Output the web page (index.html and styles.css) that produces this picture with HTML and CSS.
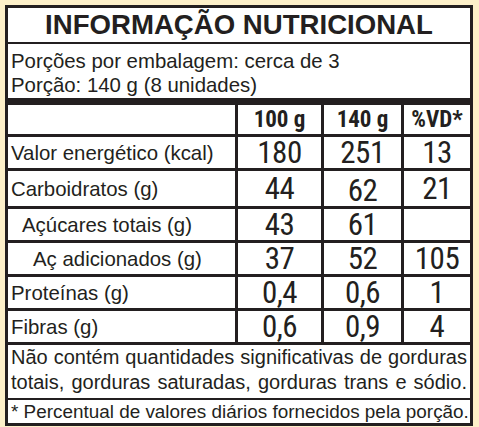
FILE: index.html
```html
<!DOCTYPE html>
<html>
 <head>
    <meta charset="utf-8">
    <meta name="viewport" content="width=device-width">
    <title>Informação nutricional</title>
    <link rel="stylesheet" href="styles.css">
 </head>
 <body>
  <div class="label">
    <h1 class="title">INFORMAÇÃO NUTRICIONAL</h1>
    <div class="serving">
      <p>Porções por embalagem: cerca de 3</p>
      <p>Porção: 140 g (8 unidades)</p>
    </div>
    <table class="facts">
      <colgroup>
        <col class="c-name">
        <col class="c-100">
        <col class="c-140">
        <col class="c-vd">
      </colgroup>
      <thead>
        <tr><th></th><th>100 g</th><th>140 g</th><th>%VD*</th></tr>
      </thead>
      <tbody>
        <tr><td class="name">Valor energético (kcal)</td><td>180</td><td>251</td><td>13</td></tr>
        <tr><td class="name">Carboidratos (g)</td><td>44</td><td class="low">62</td><td>21</td></tr>
        <tr><td class="name sub">Açúcares totais (g)</td><td>43</td><td>61</td><td></td></tr>
        <tr><td class="name sub2">Aç adicionados (g)</td><td>37</td><td>52</td><td>105</td></tr>
        <tr><td class="name">Proteínas (g)</td><td>0,4</td><td>0,6</td><td>1</td></tr>
        <tr><td class="name">Fibras (g)</td><td>0,6</td><td>0,9</td><td>4</td></tr>
      </tbody>
    </table>
    <p class="note"><span>Não contém quantidades significativas de gorduras</span><span>totais, gorduras saturadas, gorduras trans e sódio.</span></p>
    <p class="foot">* Percentual de valores diários fornecidos pela porção.</p>
  </div>
 </body>
</html>
```

FILE: styles.css
```css
body, html {
  margin: 0;
}

body {
  background: #fdf0c9;
  color: #231f20;
  font-family: "Liberation Sans", Arial, sans-serif;
}

.label {
  width: 462px;
  margin: 5px;
  border: 3px solid #231f20;
  background: #fff;
}

.title {
  margin: 0;
  height: 34px;
  line-height: 33px;
  font-size: 27.6px;
  font-weight: bold;
  text-align: center;
  white-space: nowrap;
  border-bottom: 2px solid #231f20;
}

.serving {
  height: 47px;
  padding: 5px 3px 2px;
  border-bottom: 7px solid #231f20;
}

.serving p {
  margin: 0;
  font-size: 20.4px;
  line-height: 24px;
  white-space: nowrap;
}

.facts {
  width: 100%;
  table-layout: fixed;
  border-collapse: separate;
  border-spacing: 0;
}

.c-name { width: 227px; }
.c-100 { width: 86px; }
.c-140 { width: 80px; }
.c-vd { width: 69px; }

.facts th, .facts td {
  padding: 0;
  border-left: 3px solid #231f20;
  border-bottom: 3px solid #231f20;
  text-align: center;
  white-space: nowrap;
}

.facts th:first-child, .facts td:first-child {
  border-left: none;
}

.facts th {
  height: 29px;
  font-family: Roboto, "Liberation Sans", sans-serif;
  font-stretch: 85%;
  font-size: 23px;
  font-weight: bold;
  line-height: 29px;
}

.facts td {
  height: 31px;
  font-family: Roboto, "Liberation Sans", sans-serif;
  font-stretch: 75%;
  font-size: 31px;
  line-height: 31px;
  letter-spacing: -0.5px;
}

.facts td.name {
  padding-left: 3px;
  font-family: "Liberation Sans", Arial, sans-serif;
  font-stretch: normal;
  font-size: 20.4px;
  line-height: 26px;
  letter-spacing: 0;
  text-align: left;
}

.facts td.sub {
  padding-left: 14px;
}

.facts td.sub2 {
  padding-left: 25px;
}

.facts td.low {
  padding-top: 4px;
  line-height: 27px;
}

.note {
  margin: 0;
  padding: 0 3px 3px;
  font-size: 20px;
  line-height: 25px;
  border-bottom: 2px solid #231f20;
}

.note span {
  display: block;
  text-align: justify;
  text-align-last: justify;
}

.foot {
  margin: 0;
  padding: 0 3px;
  font-size: 18.9px;
  line-height: 23px;
  white-space: nowrap;
}
```
